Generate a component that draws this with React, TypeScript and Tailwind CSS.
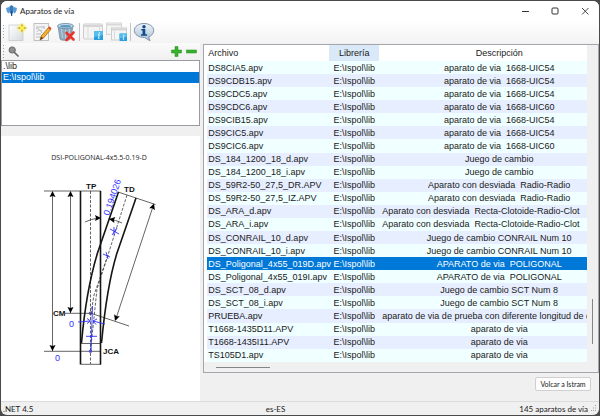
import React from "react";

const LIB = "E:\\Ispol\\lib";

const rows: [string, string][] = [
  ["DS8CIA5.apv", "aparato de via  1668-UIC54"],
  ["DS9CDB15.apv", "aparato de via  1668-UIC54"],
  ["DS9CDC5.apv", "aparato de via  1668-UIC54"],
  ["DS9CDC6.apv", "aparato de via  1668-UIC60"],
  ["DS9CIB15.apv", "aparato de via  1668-UIC54"],
  ["DS9CIC5.apv", "aparato de via  1668-UIC54"],
  ["DS9CIC6.apv", "aparato de via  1668-UIC60"],
  ["DS_184_1200_18_d.apv", "Juego de cambio"],
  ["DS_184_1200_18_i.apv", "Juego de cambio"],
  ["DS_59R2-50_27,5_DR.APV", "Aparato con desviada  Radio-Radio"],
  ["DS_59R2-50_27,5_IZ.APV", "Aparato con desviada  Radio-Radio"],
  ["DS_ARA_d.apv", "Aparato con desviada  Recta-Clotoide-Radio-Clot"],
  ["DS_ARA_i.apv", "Aparato con desviada  Recta-Clotoide-Radio-Clot"],
  ["DS_CONRAIL_10_d.apv", "Juego de cambio CONRAIL Num 10"],
  ["DS_CONRAIL_10_i.apv", "Juego de cambio CONRAIL Num 10"],
  ["DS_Poligonal_4x55_019D.apv", "APARATO de via  POLIGONAL"],
  ["DS_Poligonal_4x55_019I.apv", "APARATO de via  POLIGONAL"],
  ["DS_SCT_08_d.apv", "Juego de cambio SCT Num 8"],
  ["DS_SCT_08_i.apv", "Juego de cambio SCT Num 8"],
  ["PRUEBA.apv", "aparato de via de prueba con diferente longitud de de"],
  ["T1668-1435D11.APV", "aparato de via"],
  ["T1668-1435I11.APV", "aparato de via"],
  ["TS105D1.apv", "aparato de via"],
];

// Descriptions longer than this fill the column and start at its left edge.
const LONG = 40;

function Grip() {
  return (
    <span className="flex flex-col gap-[2px]" aria-hidden="true">
      {[0, 1, 2, 3, 4].map((i) => (
        <span key={i} className="size-px bg-[#a0a0a0]" />
      ))}
    </span>
  );
}

function NewIcon() {
  return (
    <svg viewBox="0 0 21 20" className="h-5 w-[21px]">
      <defs>
        <linearGradient id="sheet" x1="0" y1="0" x2="1" y2="1">
          <stop offset="0" stopColor="#ffffff" />
          <stop offset="1" stopColor="#d6dadd" />
        </linearGradient>
        <radialGradient id="glow">
          <stop offset="0" stopColor="#fff04a" />
          <stop offset="0.5" stopColor="#ffee66" stopOpacity="0.7" />
          <stop offset="1" stopColor="#fff7b0" stopOpacity="0" />
        </radialGradient>
      </defs>
      <rect x="2" y="3" width="14" height="15.500" fill="url(#sheet)" stroke="#c2c5c8" strokeWidth="0.700" />
      <circle cx="15" cy="6" r="6" fill="url(#glow)" />
      <path d="M15 1l1 4 4.500 1-4.500 1-1 4-1-4-4.500-1 4.500-1z" fill="#b39a1c" />
      <circle cx="15" cy="6" r="2" fill="#fff04a" />
    </svg>
  );
}

function EditIcon() {
  return (
    <svg viewBox="0 0 20 20" className="size-5">
      <rect x="2" y="1.500" width="14.500" height="17" fill="#f4f4f4" stroke="#b8babc" strokeWidth="0.900" />
      <path d="M4 5h8M4 7c3-3 3 4 6 1M5 10c2-3 4-2 5 1M4 12h5M4 15h4M12 4v3" stroke="#b3b6ba" fill="none" strokeWidth="0.900" />
      <path d="M8 18l1.200-4L16.500 5.500l2.300 2L11.500 16z" fill="#f5b02c" stroke="#9c5c10" strokeWidth="0.700" />
      <path d="M16 6l1.500-1.700 2 2-1.300 1.700z" fill="#df4d30" />
      <path d="M8 18l1.100-3.600 2.200 1.800z" fill="#5b4030" />
    </svg>
  );
}

function TrashIcon() {
  return (
    <svg viewBox="0 0 20 20" className="size-5">
      <path d="M2 4l2 13c.4 1.800 10 1.800 10.500 0L17 4z" fill="#8fabc0" stroke="#6a879e" strokeWidth="0.700" />
      <path d="M5.500 7l1 9M9.500 8v9M13.500 7l-1 9" stroke="#bdd2e0" strokeWidth="1" />
      <ellipse cx="9.500" cy="4" rx="8" ry="2.500" fill="#c3dcec" stroke="#6d8ca3" strokeWidth="0.900" />
      <ellipse cx="9.500" cy="4.300" rx="5.500" ry="1.300" fill="#5e97c0" />
      <path d="M10.500 11l7 6.500M17.500 10.500l-7 7.500" stroke="#e8352a" strokeWidth="2.600" strokeLinecap="round" />
    </svg>
  );
}

function InfoBadge({ x, y, s }: { x: number; y: number; s: number }) {
  return (
    <g transform={`translate(${x} ${y}) scale(${s})`}>
      <rect width="9" height="9" rx="0.500" fill="#2b9fdd" />
      <path d="M0 0h9v4L0 6z" fill="#56bdee" />
      <path d="M4 3.800h1.300L4.500 7.300h1" stroke="#fff" strokeWidth="0.900" fill="none" />
      <circle cx="5.300" cy="2" r="0.700" fill="#fff" />
    </g>
  );
}

function PanelInfoIcon() {
  return (
    <svg viewBox="0 0 21 18" className="h-[18px] w-[21px]">
      <rect x="0.500" y="1" width="19" height="15" rx="1" fill="#f4f4f4" stroke="#cdcdcd" />
      <path d="M1 3h18" stroke="#d6d6d6" strokeWidth="2" />
      <path d="M5 4v11M16.500 4v8" stroke="#dcdcdc" />
      <InfoBadge x={11} y={8} s={1} />
    </svg>
  );
}

function PanelsInfoIcon() {
  return (
    <svg viewBox="0 0 22 20" className="h-5 w-[22px]">
      <rect x="0.500" y="1" width="15" height="11.500" fill="#f5f5f5" stroke="#d6d6d6" />
      <path d="M1 2.800h14" stroke="#d8d8d8" strokeWidth="1.500" />
      <rect x="5.500" y="6" width="15" height="12" fill="#f5f5f5" stroke="#cecece" />
      <path d="M6 7.500h14" stroke="#d6d6d6" strokeWidth="2" />
      <path d="M8.500 9v9" stroke="#dcdcdc" />
      <InfoBadge x={13.5} y={11.5} s={0.83} />
    </svg>
  );
}

function AboutIcon() {
  return (
    <svg viewBox="0 0 22 20" className="h-5 w-[22px]">
      <defs>
        <linearGradient id="bubble" x1="0" y1="0" x2="0" y2="1">
          <stop offset="0" stopColor="#edf4fa" />
          <stop offset="1" stopColor="#a9bfd2" />
        </linearGradient>
      </defs>
      <path d="M11 1.500c5.500 0 9.700 3 9.700 7 0 3-2 5.200-5 6.300l1.300 4-5.500-3.300C5.500 15.500 1.300 12.500 1.300 8.500s4.200-7 9.700-7z" fill="url(#bubble)" stroke="#8095a8" />
      <circle cx="11" cy="4.700" r="1.700" fill="#12498c" />
      <path d="M8.300 7h4v5.300h1.800v1.500H8v-1.500h1.600V8.500H8.300z" fill="#12498c" />
    </svg>
  );
}

function AppIcon() {
  return (
    <svg viewBox="0 0 11 11" className="size-[11px]">
      <path d="M3.500 1.500L5.500 0l2 1.500.3 3L7 8.500H4l-1-4z" fill="#3478bd" />
      <path d="M0 3l3-1 1 3-1 3.500C1 8 .5 6 0 3zM11 3L8 2 7 5l1 3.500c2-.5 2.500-2.500 3-5.500z" fill="#5b9bd5" />
      <path d="M5 6h1.200v5H5z" fill="#274f7c" />
    </svg>
  );
}

function Arrow({ x, y, a }: { x: number; y: number; a: number }) {
  return <path d="M0 0L-6 -3L-5 0L-6 3Z" fill="#000" transform={`translate(${x} ${y}) rotate(${a})`} />;
}

function Drawing() {
  const small = "font-['Liberation_Sans',Arial,sans-serif] text-[8px] font-bold";
  const blue = "font-['Liberation_Sans',Arial,sans-serif] text-[9px]";
  return (
    <svg viewBox="1 137 198 264" preserveAspectRatio="xMinYMin meet" className="h-[264px] w-full">
      <g fill="none" stroke="#3c3c3c" strokeWidth="0.800">
        <path d="M44 192H101M52.500 193V352M70.500 193V314M44 352.300H101M65 314.300H91L129 327M81 344.500H101M81 365.300H101M118 193L155.500 205.500M153.500 206L115.500 321" />
        <path d="M90.500 192V365M127 196L108 256 97 290 90.500 352M108 256L94 296 91 314" strokeDasharray="3 1.500" />
        <path d="M85 223Q91 220 99 219M109 220Q116 221 122 224" />
      </g>
      <g fill="none" stroke="#151515" strokeWidth="1.600">
        <path d="M80.500 192V365.500M100.500 192V365.500" />
        <path d="M118.500 193L97.500 254Q86 292 81.500 344" />
        <path d="M136 199L117 254Q107 286 101.500 344" />
      </g>
      <Arrow x={52.5} y={192} a={-90} />
      <Arrow x={70.5} y={192} a={-90} />
      <Arrow x={52.5} y={352} a={90} />
      <Arrow x={70.5} y={314} a={90} />
      <Arrow x={154} y={204.5} a={-71} />
      <Arrow x={115} y={322} a={109} />
      <Arrow x={101} y={219} a={0} />
      <Arrow x={109} y={220} a={190} />
      <g fill="none" stroke="#3030ff" strokeWidth="0.900">
        <path d="M91 352L92.500 307M86 337.300H97M78 323L90 322M87 319.500L90.500 322 87 324.500M105 325L93 322M97 320L93 322 96 325.500" />
        <path d="M110 230L119 235M112 236L117 229M114 228V236M103 255L110 258M106 253L108 260" />
        <circle cx="90.500" cy="314.300" r="1.300" stroke="#303080" />
        <circle cx="90.500" cy="352.300" r="1.300" />
      </g>
      <text x="99" y="161" textAnchor="middle" fill="#222" className="font-['Open_Sans','Noto_Sans',sans-serif] text-[7px]">DSI-POLIGONAL-4x5.5-0.19-D</text>
      <text x="86" y="190" fill="#111" className={small}>TP</text>
      <text x="124" y="193" fill="#111" className={small}>TD</text>
      <text x="53" y="317" fill="#111" className={small}>CM</text>
      <text x="103" y="355" fill="#111" className={small}>JCA</text>
      <text x="69" y="328" fill="#3030ff" className={blue}>0</text>
      <text x="55" y="362" fill="#3030ff" className={blue}>0</text>
      <text transform="translate(109 217) rotate(-71)" fill="#3030ff" className={blue}>0.194026</text>
    </svg>
  );
}

const tool = "flex items-center justify-center";
const sep = "h-[18px] w-px bg-[#c4c4c4]";

export default function App() {
  return (
    <div className="flex min-h-screen w-full bg-[#4a4a4a] p-px font-['Lato',sans-serif] text-[8px] leading-3 text-[#1a1a1a]">
      <div className="flex min-w-0 flex-1 flex-col overflow-hidden rounded-md bg-[#f0f0f0]">
        <header className="flex h-[19px] items-center bg-white pl-[5px]">
          <AppIcon />
          <h1 className="ml-[3px] flex-1">Aparatos de vía</h1>
          <div className="flex items-center gap-[22px] pr-[10px] text-[#333]">
            <button aria-label="Minimizar"><svg viewBox="0 0 8 8" className="size-2"><path d="M1 4.500h7" stroke="currentColor" /></svg></button>
            <button aria-label="Maximizar"><svg viewBox="0 0 8 8" className="size-2"><rect x="1" y="1" width="6" height="6" rx="1" fill="none" stroke="currentColor" /></svg></button>
            <button aria-label="Cerrar"><svg viewBox="0 0 8 8" className="size-2"><path d="M1 1l6.500 6.500M7.500 1L1 7.500" stroke="currentColor" strokeWidth="0.900" /></svg></button>
          </div>
        </header>
        <div className="flex h-[23px] items-center bg-linear-to-b from-white to-[#f3f3f3] pl-[2px]">
          <Grip />
          <button aria-label="Nuevo" className={`${tool} ml-[3px]`}><NewIcon /></button>
          <button aria-label="Editar" className={`${tool} ml-1`}><EditIcon /></button>
          <button aria-label="Eliminar" className={`${tool} ml-1`}><TrashIcon /></button>
          <span className={`${sep} ml-[3px]`} />
          <button aria-label="Propiedades" className={`${tool} ml-[3px]`}><PanelInfoIcon /></button>
          <button aria-label="Propiedades de todos" className={`${tool} ml-[2px]`}><PanelsInfoIcon /></button>
          <span className={`${sep} ml-[2px]`} />
          <button aria-label="Acerca de" className={`${tool} ml-[2px]`}><AboutIcon /></button>
        </div>
        <main className="flex min-h-0 flex-1">
          <section className="flex w-1/3 flex-col">
            <div className="flex h-[17px] items-center bg-linear-to-b from-[#fafafa] to-[#f0f0f0] pr-[3px] pl-[2px]">
              <Grip />
              <button aria-label="Buscar" className="ml-1">
                <svg viewBox="0 0 11 11" className="size-[11px]">
                  <path d="M6.500 6.500l3.500 3.500" stroke="#666" strokeWidth="1.700" strokeLinecap="round" />
                  <circle cx="4.200" cy="4" r="3" fill="#909090" stroke="#6e6e6e" strokeWidth="1.200" />
                </svg>
              </button>
              <span className="flex-1" />
              <button aria-label="Añadir">
                <svg viewBox="0 0 11 11" className="size-[11px]"><path d="M4 .5h3V4h3.500v3H7v3.500H4V7H.5V4H4z" fill="#36b22c" stroke="#258b20" strokeWidth="0.500" /></svg>
              </button>
              <button aria-label="Quitar" className="ml-1">
                <svg viewBox="0 0 11 11" className="size-[11px]"><rect x="0.500" y="4" width="10" height="3" fill="#36b22c" stroke="#258b20" strokeWidth="0.500" /></svg>
              </button>
            </div>
            <ul className="h-[66px] border border-[#9a9ba0] bg-white font-['Liberation_Sans',Arial,sans-serif] text-[9px] leading-[11px]">
              <li className="pl-px">.\lib</li>
              <li className="bg-[#0078d7] pl-px text-white">{LIB}</li>
            </ul>
            <div className="mt-[10px] flex-1 bg-white">
              <Drawing />
            </div>
          </section>
          <section className="flex min-w-0 flex-1 flex-col pt-px pl-[3px]">
            <div className="flex h-[329px] border border-[#a5a6ab] bg-[#f0f0f0] font-['Liberation_Sans',Arial,sans-serif] text-[9px] leading-3">
              <div className="flex min-w-0 flex-1 flex-col">
                <div className="h-[317px] bg-white pl-[3px]">
                  <table className="h-full w-full table-fixed border-collapse whitespace-pre">
                    <thead>
                      <tr className="h-4">
                        <th className="w-[122px] p-0 pl-px text-left font-normal">Archivo</th>
                        <th className="w-[50px] bg-[#d9e9f8] p-0 font-normal">Librería</th>
                        <th className="p-0 pl-8 font-normal">Descripción</th>
                      </tr>
                    </thead>
                    <tbody>
                      {rows.map(([file, text], i) => (
                        <tr
                          key={file}
                          className={
                            i === 15 ? "bg-[#0078d7] text-white" : i % 2 ? "bg-[#e6eeff]" : "bg-[#f0ffff]"
                          }
                        >
                          <td className="p-0 pl-px">{file}</td>
                          <td className="p-0 text-center">{LIB}</td>
                          <td
                            className={
                              text.length > LONG
                                ? "overflow-hidden p-0 pl-[3px] text-left"
                                : "overflow-hidden p-0 pl-8 text-center"
                            }
                          >
                            {text}
                          </td>
                        </tr>
                      ))}
                    </tbody>
                  </table>
                </div>
                <div className="flex flex-1 items-center pl-3">
                  <span className="h-px w-[54px] bg-[#858585]" />
                </div>
              </div>
              <div className="flex w-[11px] flex-col items-center justify-end bg-[#f0f0f0] pb-7">
                <span className="h-[45px] w-px bg-[#858585]" />
              </div>
            </div>
            <div className="flex flex-1 items-start justify-end pt-1 pr-2">
              <button className="h-[14px] w-14 rounded-[2px] border border-[#d0d0d0] bg-[#fdfdfd] text-[7px] leading-3 whitespace-nowrap">
                Volcar a Istram
              </button>
            </div>
          </section>
        </main>
        <footer className="flex h-[14px] items-center border-t border-[#dcdcdc] px-[2px]">
          <span className="flex-1">.NET 4.5</span>
          <span className="mr-10">es-ES</span>
          <span className="flex-1 pr-[2px] text-right">145 aparatos de vía</span>
          <svg viewBox="0 0 7 7" className="size-[7px]" fill="#a0a0a0">
            <path d="M5 0h1v1H5zM3 2.500h1v1H3zM5 2.500h1v1H5zM1 5h1v1H1zM3 5h1v1H3zM5 5h1v1H5z" />
          </svg>
        </footer>
      </div>
    </div>
  );
}
